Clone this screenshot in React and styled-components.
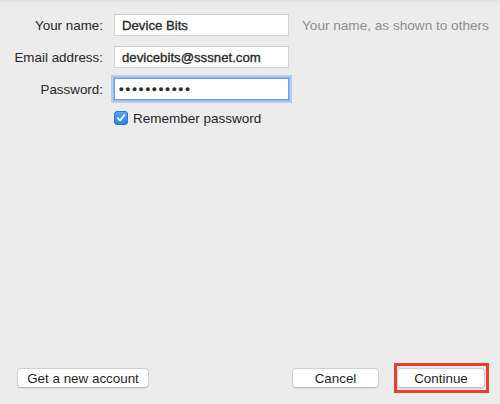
import React from 'react';
import styled, { createGlobalStyle } from 'styled-components';

const GlobalStyle = createGlobalStyle`
  html, body {
    margin: 0;
    padding: 0;
    background: #ececec;
  }
  body {
    font-family: "Liberation Sans", Arial, sans-serif;
    -webkit-font-smoothing: antialiased;
  }
`;

const StyledSheet = styled.div`
  height: 404px;
  display: flex;
  flex-direction: column;
  justify-content: space-between;
  background: linear-gradient(#dedede 0, #ececec 3px);
  box-sizing: border-box;
`;

const StyledForm = styled.div`
  display: grid;
  grid-template-columns: 103px 175px auto;
  grid-template-rows: 22px 22px 22px 16px;
  column-gap: 11px;
  row-gap: 10px;
  padding-top: 14px;
  align-items: center;
`;

const StyledLabel = styled.label`
  text-align: right;
  font-size: 13.4px;
  color: #262626;
`;

const StyledInput = styled.input`
  box-sizing: border-box;
  width: 100%;
  height: 22px;
  margin: 0;
  padding: ${props => (props.type === 'password' ? '0 4px' : '0 7px')};
  border: 1px solid #d6d6d6;
  border-top-color: #c9c9c9;
  background: #fff;
  font-family: "Liberation Sans", Arial, sans-serif;
  font-size: 13.2px;
  color: #2a2a2a;
  -webkit-text-stroke: 0.35px #2a2a2a;
  outline: none;
  letter-spacing: ${props => (props.type === 'password' ? '2px' : '0')};
  box-shadow: ${props =>
    props.$focused ? '0 0 0 1px #8db8ec, 0 0 0 3px rgba(120, 170, 235, 0.45)' : 'none'};
  border-color: ${props => (props.$focused ? '#6ea3e3' : undefined)};
`;

const StyledHint = styled.span`
  margin-left: 2px;
  font-size: 13.6px;
  color: #8c8c8c;
  white-space: nowrap;
`;

const StyledCheckRow = styled.div`
  grid-column: 2 / 4;
  display: flex;
  align-items: center;
  gap: 5px;
  font-size: 13.5px;
  color: #262626;
`;

const StyledBox = styled.span`
  width: 14px;
  height: 14px;
  border-radius: 3px;
  background: linear-gradient(#5aa3f5, #2f80ec);
  border: 1px solid #2a74d6;
  box-sizing: border-box;
  display: flex;
  align-items: center;
  justify-content: center;
`;

const StyledFooter = styled.div`
  display: flex;
  align-items: center;
  justify-content: space-between;
  padding: 0 11px 11px 17px;
`;

const StyledGroup = styled.div`
  display: flex;
  align-items: center;
  gap: 15px;
`;

const StyledButton = styled.button`
  box-sizing: border-box;
  height: 20px;
  width: ${props => props.width}px;
  margin: 0;
  padding: 0;
  background: #fff;
  border: 1px solid #cfcfcf;
  border-bottom-color: #bdbdbd;
  border-radius: 4px;
  box-shadow: 0 1px 0 rgba(0, 0, 0, 0.06);
  font-family: "Liberation Sans", Arial, sans-serif;
  font-size: 13.4px;
  color: #1f1f1f;
`;

const StyledHighlight = styled.div`
  display: flex;
  border: 3px solid #e8412b;
  padding: 2px 1px 2px 0;
`;

const App = () => {
  return (
    <StyledSheet>
      <GlobalStyle />
      <StyledForm>
        <StyledLabel>Your name:</StyledLabel>
        <StyledInput readOnly value="Device Bits" />
        <StyledHint>Your name, as shown to others</StyledHint>

        <StyledLabel>Email address:</StyledLabel>
        <StyledInput readOnly value="devicebits@sssnet.com" />
        <span />

        <StyledLabel>Password:</StyledLabel>
        <StyledInput readOnly type="password" value="devicebits1" $focused />
        <span />

        <span />
        <StyledCheckRow>
          <StyledBox>
            <svg width="10" height="10" viewBox="0 0 10 10">
              <path d="M1.8 5.2 L4 7.6 L8.4 2" fill="none" stroke="#fff" strokeWidth="1.8" strokeLinecap="round" strokeLinejoin="round" />
            </svg>
          </StyledBox>
          Remember password
        </StyledCheckRow>
      </StyledForm>

      <StyledFooter>
        <StyledButton width={132}>Get a new account</StyledButton>
        <StyledGroup>
          <StyledButton width={87}>Cancel</StyledButton>
          <StyledHighlight>
            <StyledButton width={88}>Continue</StyledButton>
          </StyledHighlight>
        </StyledGroup>
      </StyledFooter>
    </StyledSheet>
  );
};

export default App;
